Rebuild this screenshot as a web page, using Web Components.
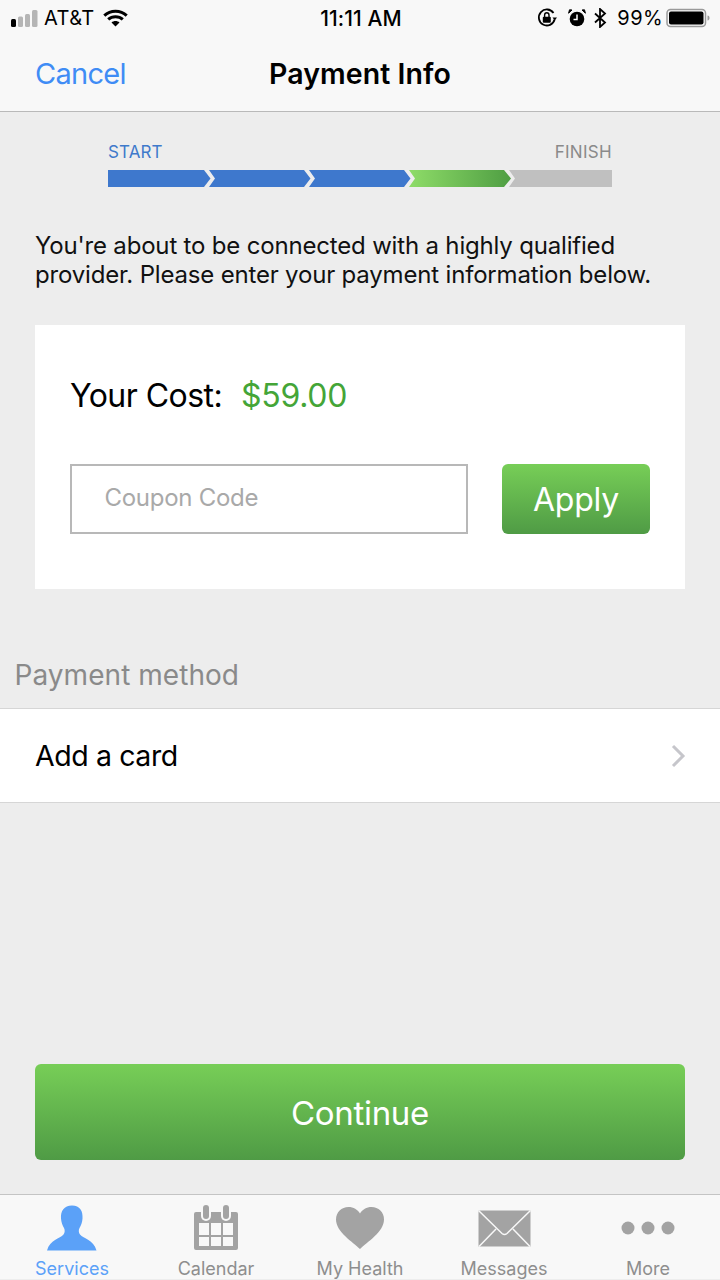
<!DOCTYPE html>
<html><head><meta charset="utf-8">
<style>
html,body{margin:0;padding:0}
body{width:720px;height:1280px;background:#ededed;font-family:Inter,"Liberation Sans",sans-serif;color:#000;overflow:hidden;display:flex;flex-direction:column}
</style></head><body>
<app-header></app-header>
<step-progress></step-progress>
<intro-text>You're about to be connected with a highly qualified<br>provider. Please enter your payment information below.</intro-text>
<cost-card></cost-card>
<section-label>Payment method</section-label>
<card-row>Add a card</card-row>
<continue-button>Continue</continue-button>
<tab-bar></tab-bar>
<script>
function def(name,html){customElements.define(name,class extends HTMLElement{constructor(){super();this.attachShadow({mode:'open'}).innerHTML=html}})}
def('status-bar',`<style>
:host{display:grid;grid-template-columns:1fr auto 1fr;align-items:center;height:36px;padding:0 8px 0 10px;font-size:20px;letter-spacing:-.2px}
.l,.r{display:flex;align-items:center}.r{justify-content:flex-end}
.t{font-weight:500;letter-spacing:.1px;font-size:21px}svg{display:block}
</style>
<div class="l"><svg width="28" height="17" viewBox="0 0 28 17"><rect x="1" y="9" width="5" height="8" rx="1.5" fill="#000"/><rect x="8" y="6.500" width="5" height="10.500" rx="1.5" fill="#b5b5b5"/><rect x="15" y="4" width="5" height="13" rx="1.5" fill="#b5b5b5"/><rect x="22" y="0" width="5.500" height="17" rx="1.5" fill="#b5b5b5"/></svg>
<span style="margin:0 0 0 6px;letter-spacing:.4px">AT&amp;T</span>
<svg style="margin-left:8px" width="25" height="18" viewBox="0 0 25 18" fill="none" stroke="#000" stroke-width="3"><path d="M1.3 6.6C7.5 .8 17.5 .8 23.7 6.6"/><path d="M5.2 10.4c4-3.6 10.6-3.6 14.6 0"/><path d="M12.5 17.5l-4-4c2.2-2 5.8-2 8 0z" fill="#000" stroke="none"/></svg></div>
<div class="t">11:11 AM</div>
<div class="r"><svg width="20" height="20" viewBox="0 0 20 20" fill="none"><path d="M17.6 11.5A8 8 0 1 1 16.5 5" stroke="#000" stroke-width="1.8"/><path d="M15.5 9.5h4.5l-2.2 3z" fill="#000"/><rect x="5.8" y="8.7" width="8" height="6" rx="1" fill="#000"/><path d="M7.6 9V7a2.2 2.2 0 0 1 4.4 0v2" stroke="#000" stroke-width="1.4"/></svg>
<svg style="margin-left:11px" width="18" height="18" viewBox="0 0 18 18"><circle cx="9" cy="10" r="7.3" fill="#000"/><path d="M9 5.5V10.5H5.5" stroke="#fff" stroke-width="1.5" fill="none"/><path d="M.6 4.2 4 1 1.5.8zM17.4 4.2 14 1l2.5-.2z" fill="#000" stroke="#000"/></svg>
<svg style="margin-left:8px" width="13" height="20" viewBox="0 0 13 20" fill="none" stroke="#000" stroke-width="1.8"><path d="M1 5.5l10 9-5 4.5V1l5 4.500-10 9"/></svg>
<span style="margin-left:10px;letter-spacing:.4px">99%</span>
<svg style="margin-left:3px" width="46" height="20" viewBox="0 0 46 20"><rect x="1" y="1.5" width="38.500" height="17" rx="3.500" fill="none" stroke="#9a9a9a" stroke-width="1.500"/><rect x="3" y="3.500" width="34.500" height="13" rx="2" fill="#000"/><path d="M41.500 7.500c1.500.3 2 1.200 2 2.500s-.5 2.200-2 2.500z" fill="#9a9a9a"/></svg></div>`);
def('app-header',`<style>
:host{display:block;background:#f8f8f8;border-bottom:1px solid #b9b9b9;height:111px;box-sizing:content-box;flex:none}
.n{position:relative;display:flex;justify-content:center;align-items:center;height:75px}
a{position:absolute;left:35px;top:20px;color:#3f8cf5;font-size:29px;line-height:36px;letter-spacing:-.7px}
h1{margin:0;font-size:28.500px;font-weight:600;letter-spacing:.08px;line-height:36px}
</style><status-bar></status-bar><div class="n"><a>Cancel</a><h1>Payment Info</h1></div>`);
def('step-progress',`<style>
:host{display:block;margin:28px 108px 0;flex:none;width:504px}
.lab{display:flex;justify-content:space-between;font-size:17px;line-height:24px;letter-spacing:.1px;height:30px}
.s{color:#3f7acb}.f{color:#8a8a8a;letter-spacing:.3px}svg{display:block}
</style><div class="lab"><span class="s">START</span><span class="f">FINISH</span></div>
<svg width="504" height="17" viewBox="0 0 504 18" preserveAspectRatio="none"><defs><linearGradient id="g"><stop offset="0" stop-color="#8edc68"/><stop offset="1" stop-color="#4f9e43"/></linearGradient></defs>
<path d="M0 0H96L102.500 9 96 18H0z" fill="#3e78cd"/>
<path d="M101 0H196L202.500 9 196 18H101L107 9z" fill="#3e78cd"/>
<path d="M201 0H296L302.500 9 296 18H201L207 9z" fill="#3e78cd"/>
<path d="M301 0H396L403 9 396 18H301L307 9z" fill="url(#g)"/>
<path d="M401 0H504V18H401L407 9z" fill="#c0c0c0"/></svg>`);
def('intro-text',`<style>:host{display:block;margin:44px 35px 0;font-size:24px;line-height:29px;letter-spacing:-.18px;flex:none;color:#111}</style><slot></slot>`);
def('cost-card',`<style>
:host{display:block;flex:none;box-sizing:border-box;margin:36px 35px 0;height:264px;background:#fff;padding:51px 35px 0 34.500px}
.c{display:flex;font-size:32px;line-height:40px;letter-spacing:-.55px;padding-left:.5px}.p{color:#44a537;margin-left:19px;letter-spacing:-.3px}
.r{display:flex;justify-content:space-between;margin-top:48px}
.i{box-sizing:border-box;width:398px;height:69.500px;border:2px solid #b8b8b8;color:#a9a9a9;font-size:24px;line-height:64px;padding-left:33px;letter-spacing:-.28px}
.b{box-sizing:border-box;padding-top:2px;width:148px;height:69.500px;border-radius:6px;background:linear-gradient(#77ce57,#4f9b45);color:#fff;font-size:32px;display:flex;align-items:center;justify-content:center;letter-spacing:-.2px}
</style><div class="c"><span>Your Cost:</span><span class="p">$59.00</span></div>
<div class="r"><div class="i">Coupon Code</div><div class="b">Apply</div></div>`);
def('section-label',`<style>:host{display:block;flex:none;margin:68px 0 0 14.500px;height:51px;font-size:28px;line-height:36px;color:#8a8a8a;letter-spacing:.05px}</style><slot></slot>`);
def('card-row',`<style>:host{display:flex;flex:none;align-items:center;justify-content:space-between;box-sizing:border-box;height:95px;background:#fff;border-top:1px solid #d6d6d6;border-bottom:1px solid #d6d6d6;padding:0 34px 0 35px;font-size:28.500px;letter-spacing:-.4px}
svg{display:block}</style><span><slot></slot></span><svg width="15" height="24" viewBox="0 0 15 24" fill="none" stroke="#c6c6cb" stroke-width="3"><path d="M2 2l10 10-10 10"/></svg>`);
def('continue-button',`<style>:host{display:flex;flex:none;align-items:center;justify-content:center;box-sizing:border-box;margin:261px 35px 0;padding-top:2px;height:96px;border-radius:6px;background:linear-gradient(#77ce57,#4f9b45);color:#fff;font-size:33px;letter-spacing:-.3px}</style><slot></slot>`);
def('tab-item',`<style>
:host{display:flex;flex-direction:column;align-items:center;flex:1;color:#8e8e8e;font-size:18px;letter-spacing:0}
:host([active]){color:#5ba1f8}
.ic{flex:none;height:56px;display:flex;align-items:flex-end;justify-content:center}
span{line-height:22px;margin-top:7px;flex:none}
</style><div class="ic"><slot name="icon"></slot></div><span><slot></slot></span>`);
def('tab-bar',`<style>
:host{display:flex;flex:none;box-sizing:border-box;margin-top:34px;height:85px;background:#f8f8f8;border-top:1px solid #c4c4c4}
svg{display:block}
</style>
<tab-item active><svg slot="icon" width="52" height="46" viewBox="0 0 52 46" fill="#5ba1f8"><path d="M26 .5c-8 0-11.500 5.500-11 13 .3 4 1.500 7 3 9.500 1 1.700 1 4.500-.5 6.500C14 33.500 4 34.500 1 45.500h49.500c-3-11-13-12-16.500-16-1.500-2-1.500-4.800-.5-6.500 1.500-2.500 2.800-5.500 3-9.500.5-7.500-2.500-13-10.500-13z"/></svg>Services</tab-item>
<tab-item><svg slot="icon" width="44" height="46" viewBox="0 0 44 46" fill="#a3a3a3"><path fill-rule="evenodd" d="M2 7h40a2 2 0 0 1 2 2v34a2 2 0 0 1-2 2H2a2 2 0 0 1-2-2V9a2 2 0 0 1 2-2zM5 18v12h10V18zm12 0v12h10V18zm12 0v12h10V18zM5 32v9h10v-9zm12 0v9h10v-9zm12 0v9h10v-9z"/><rect x="7" y="0" width="10" height="16" rx="5" fill="#f8f8f8"/><rect x="27" y="0" width="10" height="16" rx="5" fill="#f8f8f8"/><rect x="9" y="0" width="6" height="14" rx="3"/><rect x="29" y="0" width="6" height="14" rx="3"/></svg>Calendar</tab-item>
<tab-item><svg slot="icon" width="48" height="42" viewBox="0 0 48 42" fill="#a3a3a3" style="margin-bottom:2px"><path d="M24 42C17 35 0 25 0 12.500 0 5 5.500 0 12.500 0 17.500 0 21.500 2.500 24 6.500 26.500 2.500 30.500 0 35.500 0 42.500 0 48 5 48 12.500 48 25 31 35 24 42z"/></svg>My Health</tab-item>
<tab-item><svg slot="icon" width="53" height="37" viewBox="0 0 53 37" style="margin-bottom:4px"><rect x=".5" y=".5" width="52" height="36" fill="#a3a3a3"/><path d="M.5 .5L24 23.500q2.500 2 5 0L52.500 .5M1 36.500L18 19M52 36.500L35 19" fill="none" stroke="#f8f8f8" stroke-width="1.500"/></svg>Messages</tab-item>
<tab-item><svg slot="icon" width="54" height="14" viewBox="0 0 54 14" fill="#a3a3a3" style="margin-bottom:16px"><circle cx="7" cy="7" r="6.500"/><circle cx="27" cy="7" r="6.500"/><circle cx="47" cy="7" r="6.500"/></svg>More</tab-item>`);
</script>
</body></html>
